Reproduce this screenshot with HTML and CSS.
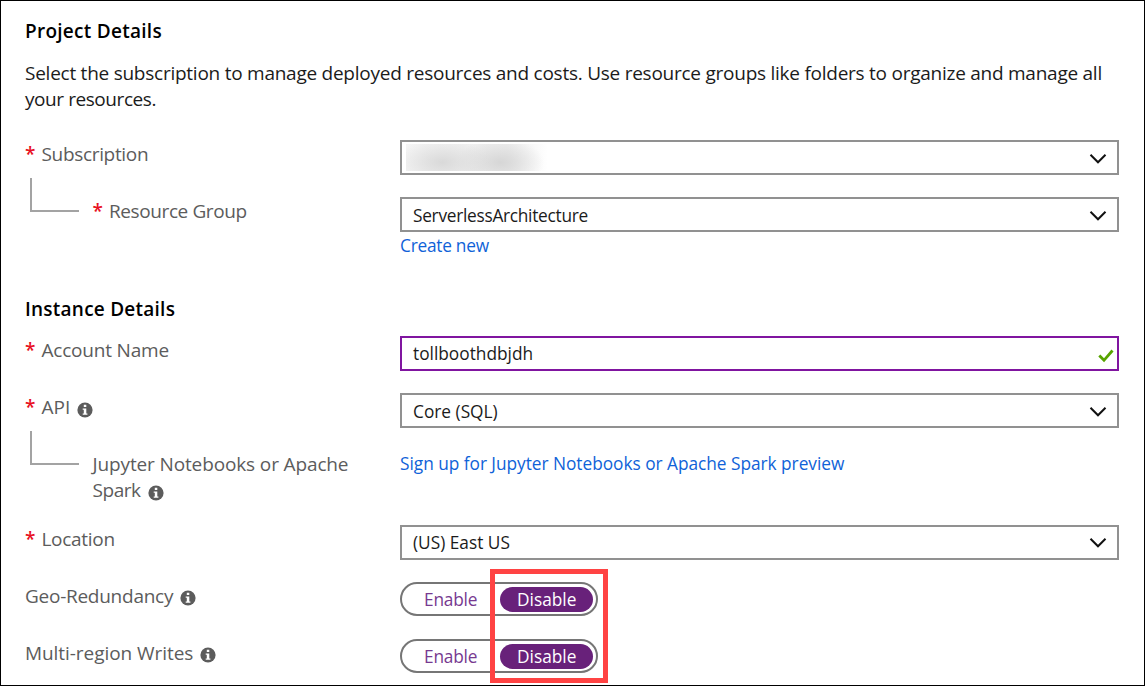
FILE: index.html
```html
<!DOCTYPE html>
<html lang="en">
<head>
<meta charset="utf-8">
<title>Create account</title>
<link rel="stylesheet" href="styles.css">
</head>
<body>
<svg class="defs" aria-hidden="true">
  <symbol id="chevron" viewBox="0 0 18 12"><path d="M1.5 1.8 L9 9.3 L16.5 1.8" fill="none" stroke="#111" stroke-width="2"/></symbol>
  <symbol id="check" viewBox="0 0 16 14"><path d="M1.3 6.5 L6 11.3 L14.5 1.5" fill="none" stroke="#57a300" stroke-width="2.8"/></symbol>
  <symbol id="info" viewBox="0 0 16 16"><circle cx="8" cy="8" r="7.6" fill="#5c5c5c"/><path d="M6.8 2.8h2.5v2.2H6.8zM5.7 6.4h3.6v5h1.1v1.3H5.7v-1.3h1.1V7.7H5.7z" fill="#fff"/></symbol>
</svg>
<main class="form">
  <h2 class="heading"><span class="t-project">Project Details</span></h2>
  <p class="intro"><span class="t-intro1">Select the subscription to manage deployed resources and costs. Use resource groups like folders to organize and manage all</span><br><span class="t-intro2">your resources.</span></p>

  <div class="row">
    <label class="label"><b class="req">*</b><span class="t-sub">Subscription</span></label>
    <div class="field"><span class="redacted"></span><svg class="chevron"><use href="#chevron"/></svg></div>
  </div>
  <div class="row group">
    <div class="label nested"><i class="branch"></i><b class="req">*</b><span class="t-rg">Resource Group</span></div>
    <div>
      <div class="field"><span class="t-server">ServerlessArchitecture</span><svg class="chevron"><use href="#chevron"/></svg></div>
      <a class="link create"><span class="t-create">Create new</span></a>
    </div>
  </div>

  <h2 class="heading second"><span class="t-instance">Instance Details</span></h2>
  <div class="row">
    <label class="label"><b class="req">*</b><span class="t-account">Account Name</span></label>
    <div class="field active"><span class="t-toll">tollboothdbjdh</span><svg class="check"><use href="#check"/></svg></div>
  </div>
  <div class="row">
    <label class="label"><b class="req">*</b><span class="t-api">API</span><svg class="info"><use href="#info"/></svg></label>
    <div class="field"><span class="t-core">Core (SQL)</span><svg class="chevron"><use href="#chevron"/></svg></div>
  </div>
  <div class="row tall">
    <div class="label nested"><i class="branch"></i><div><div class="t-jup">Jupyter Notebooks or Apache</div><div class="line"><span class="t-spark">Spark</span><svg class="info"><use href="#info"/></svg></div></div></div>
    <a class="link signup"><span class="t-sign">Sign up for Jupyter Notebooks or Apache Spark preview</span></a>
  </div>
  <div class="row">
    <label class="label"><b class="req">*</b><span class="t-loc">Location</span></label>
    <div class="field location"><span class="t-us">(US) East US</span><svg class="chevron"><use href="#chevron"/></svg></div>
  </div>
  <div class="row">
    <div class="label plain"><span class="t-geo">Geo-Redundancy</span><svg class="info"><use href="#info"/></svg></div>
    <div class="toggle"><span class="off"><span class="t-en">Enable</span></span><span class="on"><span class="t-dis">Disable</span></span></div>
  </div>
  <div class="row last">
    <div class="label plain"><span class="t-multi">Multi-region Writes</span><svg class="info"><use href="#info"/></svg></div>
    <div class="toggle"><span class="off"><span class="t-en">Enable</span></span><span class="on"><span class="t-dis">Disable</span></span></div>
  </div>
  <div class="highlight"></div>
</main>
</body>
</html>
```
FILE: styles.css
```css
* { box-sizing: border-box; }
body { margin: 0; background: #fff; }
.defs { display: none; }
.form {
  position: relative;
  width: 1145px;
  height: 686px;
  overflow: hidden;
  border: 1px solid #000;
  padding: 17px 25px 0 24px;
  font-family: "Open Sans", "Noto Sans", sans-serif;
  font-size: 19px;
  line-height: 26px;
  color: #1b1b1b;
  white-space: nowrap;
}
.heading { margin: 0; font-size: 19px; font-weight: 600; line-height: 26px; color: #000; }
.intro { margin: 16px 0 28px; }
.row { display: grid; grid-template-columns: 375px 719px; align-items: start; height: 57px; }
.group { height: 98px; }
.second { height: 41px; padding-top: 1px; }
.tall { height: 75px; }
.last { height: 46px; }
.label { display: flex; padding-top: 1px; color: #5c5c5c; }
.req { width: 16.5px; flex: none; color: #e81123; font-weight: 600; }
.branch { width: 49px; height: 34px; flex: none; margin: -20px 13.5px 0 5px; border: solid #a3a3a3; border-width: 0 0 2px 2px; }
.line { display: flex; }
.info { width: 16px; height: 16px; margin: 8px 0 0 7px; flex: none; }
.plain .info { margin-top: 7px; }
.field { display: flex; align-items: center; justify-content: space-between; height: 35px; border: 2px solid #919191; padding: 2px 10px 0 11px; font-size: 17.3px; color: #1b1b1b; }
.active { border-color: #8015a0; padding-right: 3px; padding-bottom: 2px; }
.location { padding-top: 0; }
.chevron { width: 18px; height: 12px; }
.check { width: 16px; height: 14px; margin-top: 4px; }
.redacted { width: 145px; height: 27px; margin: -2px 0 0 -7px; background: radial-gradient(ellipse 48px 24px at 25% 68%, #d9d9d9, transparent), radial-gradient(ellipse 44px 24px at 65% 68%, #d6d6d6, transparent), linear-gradient(90deg, #f5f5f5 0, #eee 70%, #fff 98%); }
.link { display: block; color: #0f62d8; font-size: 17.3px; }
.create { padding-top: 1px; }
.signup { padding-top: 1px; }
.toggle { display: grid; grid-template-columns: 98px 93px; align-items: center; width: 198px; height: 34px; border: 2px solid #767676; border-radius: 17px; font-size: 17.3px; }
.off { padding: 1px 0 0 22px; color: #773990; }
.on { height: 25px; line-height: 26px; border-radius: 13px; background: #68217a; color: #fff; padding-left: 17px; }
.highlight { position: absolute; left: 489px; top: 568px; width: 118px; height: 114px; border: 5px solid #ff4343; }
.t-project { letter-spacing: .27px; }
.t-instance { letter-spacing: .24px; }
.t-intro1 { letter-spacing: -.25px; }
.t-intro2 { letter-spacing: -.43px; }
.t-sub { letter-spacing: -.33px; }
.t-rg { letter-spacing: -.4px; }
.t-server { letter-spacing: -.28px; }
.t-create { letter-spacing: -.25px; }
.t-account { letter-spacing: -.2px; }
.t-jup { letter-spacing: -.13px; }
.t-spark { letter-spacing: -.45px; }
.t-sign { letter-spacing: -.03px; }
.t-loc { letter-spacing: -.3px; }
.t-geo { letter-spacing: -.26px; }
.t-multi { letter-spacing: -.06px; }
.t-en { letter-spacing: -.2px; }
```
